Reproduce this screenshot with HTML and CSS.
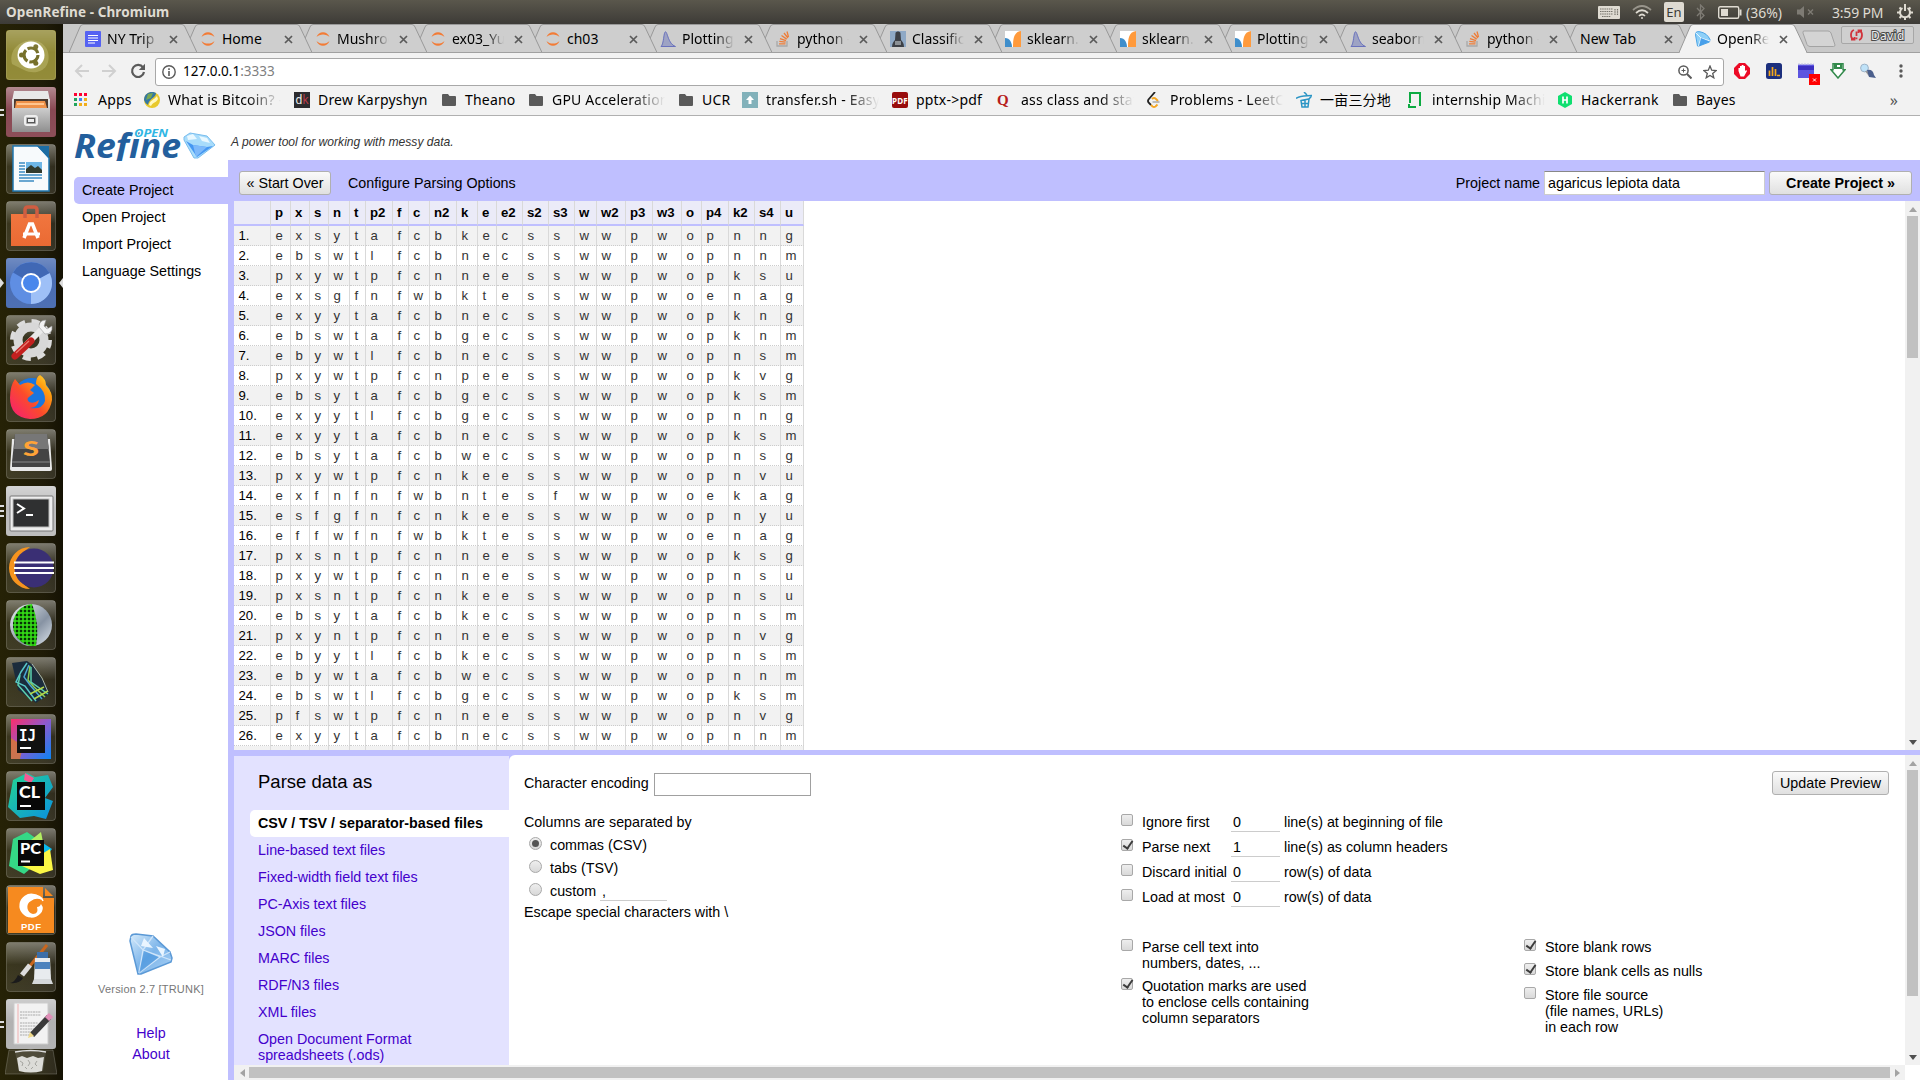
FILE: index.html
```html
<!DOCTYPE html>
<html lang="en">
<head>
<meta charset="utf-8">
<title>OpenRefine</title>
<link rel="stylesheet" href="styles.css">
</head>
<body>
<svg class="defs" width="0" height="0">
  <defs>
    <linearGradient id="gloss" x1="0" y1="0" x2="0" y2="1"><stop offset="0" stop-color="#fff" stop-opacity=".42"/><stop offset=".45" stop-color="#fff" stop-opacity=".1"/><stop offset="1" stop-color="#fff" stop-opacity=".13"/></linearGradient>
    <linearGradient id="gem" x1="0" y1="0" x2="1" y2="1"><stop offset="0" stop-color="#d6ebfb"/><stop offset=".5" stop-color="#7db5ea"/><stop offset="1" stop-color="#a9d0f4"/></linearGradient>
    <linearGradient id="steel" x1="0" y1="0" x2="0" y2="1"><stop offset="0" stop-color="#e4e4e4"/><stop offset="1" stop-color="#8f8f8f"/></linearGradient>
    <linearGradient id="bag" x1="0" y1="0" x2="0" y2="1"><stop offset="0" stop-color="#f1763f"/><stop offset="1" stop-color="#ea6a33"/></linearGradient>
    <linearGradient id="fox" x1="0" y1="1" x2="1" y2="0"><stop offset="0" stop-color="#f5197c"/><stop offset=".45" stop-color="#fb4b2b"/><stop offset=".75" stop-color="#ff9d10"/><stop offset="1" stop-color="#ffe840"/></linearGradient>
    <linearGradient id="ij" x1="0" y1="0" x2="1" y2="1"><stop offset="0" stop-color="#fe2d6a"/><stop offset=".5" stop-color="#8a5bd0"/><stop offset="1" stop-color="#0a84f4"/></linearGradient>
    <linearGradient id="cl" x1="0" y1="0" x2="1" y2="1"><stop offset="0" stop-color="#24d790"/><stop offset="1" stop-color="#0a90e0"/></linearGradient>
    <linearGradient id="ball" x1="0" y1="0" x2="1" y2="1"><stop offset="0" stop-color="#eef2f6"/><stop offset=".6" stop-color="#8793a3"/><stop offset="1" stop-color="#dfe6ee"/></linearGradient>
    <pattern id="mesh" width="4" height="4" patternUnits="userSpaceOnUse"><rect width="4" height="4" fill="#063006"/><path d="M0 1h4M1 0v4" stroke="#34e215" stroke-width="1.500"/></pattern>
    <symbol id="i-doc" viewBox="0 0 16 16"><rect width="16" height="16" rx="1" fill="#5562f2"/><path d="M3 4.500h10M3 7h10M3 9.500h10M3 12h7" stroke="#fff" stroke-width="1.200"/></symbol>
    <symbol id="i-jup" viewBox="0 0 16 16"><path d="M1.500 6C3.500-.4 12.500-.4 14.500 6 11.500 2.600 4.500 2.600 1.500 6zM1.500 10C3.500 16.400 12.500 16.400 14.500 10 11.500 13.400 4.500 13.400 1.500 10z" fill="#f37b35"/></symbol>
    <symbol id="i-dist" viewBox="0 0 16 16"><path d="M1 15.500C4 13 3.500.8 5.500.8S8 13 15.500 15.500z" fill="#9ea3c4" stroke="#6a72bd"/></symbol>
    <symbol id="i-so" viewBox="0 0 16 16"><path d="M2 10v5h10v-5" fill="none" stroke="#a8a8a8" stroke-width="1.300"/><path d="M4 12.800h6.500M4.300 10.300l6.300.9M5 7.600l6 2M6.500 4.500l5.200 3.600M9 2l4 5M12 .5l1.500 5.500" stroke="#ee7d38" stroke-width="1.300"/></symbol>
    <symbol id="i-photo" viewBox="0 0 16 16"><rect width="16" height="16" fill="#8fa9c6"/><path d="M2 16c0-4 2-6 3-7L5.500 2C6 0 10 0 10.500 2L11 9c1 1 3 3 3 7z" fill="#3d4046"/><path d="M5 10h6v4H5z" fill="#8b9095"/></symbol>
    <symbol id="i-skl" viewBox="0 0 16 16"><rect width="16" height="16" fill="#fff"/><path d="M0 7c5 0 7 5 7 9H0z" fill="#3f8ecb"/><path d="M8 16C8 8 8.500 1 16 0v16z" fill="#ff9a3c"/></symbol>
    <symbol id="i-gem" viewBox="0 0 44 42"><path d="M2 3Q3 1 7 1L24 3 41 19 43 25 42 29 12 41 9 41 1 8z" fill="url(#gem)" stroke="#5b99d6" stroke-width="1.500"/><path d="M2 4L14 17 42 27M14 17L10 40M14 17L24 3M14 17L31 24 41 19M10 40L31 24" fill="none" stroke="#cfe5fa" stroke-width="1.300"/><path d="M15 5l9 10-12-2zM27 13l9 3-2 8z" fill="#eaf5ff"/><path d="M10 40l5-22 15 6z" fill="#2f86d8" opacity=".45"/></symbol>
    <symbol id="i-gem2" viewBox="0 0 33 27"><path d="M1 5L7 1 24 4 32 13 15 26 11 26 1 8z" fill="#a8dcfb" stroke="#78bdee"/><path d="M3 9l7 4 14 2 6-1-16 11z" fill="#4597f2"/><path d="M10 13l3 12 11-10z" fill="#7db9fa"/><path d="M4 4l6-2 4 5-9 1zM16 4l8 2 3 5-8-2z" fill="#e9f8ff"/></symbol>
    <symbol id="i-gem3" viewBox="0 0 16 16"><path d="M1 1.500Q2 0 5 .8 12 2 15 8.500L14.500 11 4 15 2.500 15 0.500 4z" fill="#8ed0f8" stroke="#4ea5e6"/><path d="M1 2l5 5 9 3M6 7L3.500 15" stroke="#fff" stroke-width=".8" fill="none"/><path d="M6 7l8.500 3.500L4 15z" fill="#2f8fe6" opacity=".75"/></symbol>
    <symbol id="i-apps" viewBox="0 0 16 16"><path d="M0 1h3v3H0zM5 1h3v3H5zM10 1h3v3h-3z" fill="#f03"/><path d="M0 6h3v3H0zM0 11h3v3H0z" fill="#20a45c"/><path d="M5 6h3v3H5z" fill="#4285f4"/><path d="M5 11h3v3H5zM10 6h3v3h-3zM10 11h3v3h-3z" fill="#f2ae1b"/></symbol>
    <symbol id="i-btc" viewBox="0 0 16 16"><circle cx="8" cy="8" r="8" fill="#e8c92c"/><path d="M0 8a8 8 0 0 1 12-7C12 6 5 6 4 13A8 8 0 0 1 0 8z" fill="#3578a3"/><path d="M4 2l5-1-2 5-5 2z" fill="#79a850"/><path d="M5 13c1-5 5-5 8-9l1 3c-2 4-5 3-7 7z" fill="#fff8c0"/></symbol>
    <symbol id="i-dk" viewBox="0 0 16 16"><rect width="16" height="16" fill="#2c2b2e"/><text x="1.500" y="12" font-size="12" font-family="Roboto" fill="#eee">d</text><text x="8.500" y="12" font-size="12" font-family="Roboto" fill="#b23a48">k</text></symbol>
    <symbol id="i-folder" viewBox="0 0 16 16"><path d="M0 3q0-1 1-1h5l1.500 2H13q1 0 1 1v8q0 1-1 1H1q-1 0-1-1z" fill="#5a5a5a"/></symbol>
    <symbol id="i-tsh" viewBox="0 0 16 16"><rect width="16" height="16" fill="#82b1ba"/><path d="M8 3.500L12 8H9.500v4h-3V8H4z" fill="#fff"/></symbol>
    <symbol id="i-pdf" viewBox="0 0 16 16"><rect width="16" height="16" rx="2" fill="#990c0c"/><text x="0" y="11.500" font-size="8.500" font-weight="700" font-family="Noto Sans" textLength="16" lengthAdjust="spacingAndGlyphs" fill="#fff">PDF</text></symbol>
    <symbol id="i-q" viewBox="0 0 16 16"><text x="0" y="12.500" font-size="15" font-weight="700" font-family="Liberation Serif" fill="#b71c1c">Q</text></symbol>
    <symbol id="i-leet" viewBox="0 0 16 16"><path d="M9 0L2.500 7.500Q1.500 9 2.500 10.500L5 13" fill="none" stroke="#222" stroke-width="1.800"/><path d="M5 13l1.500 1.500q1.500 1 3 0l2-2M6 7q2-2 4 0l2 2" fill="none" stroke="#f5a623" stroke-width="1.800"/><path d="M6.500 10h7" stroke="#aaa" stroke-width="1.500"/></symbol>
    <symbol id="i-acre" viewBox="0 0 16 16"><path d="M8 0l3 3M0 6.500C5 3 9 4 16 3.500L13 7M5 8.500l8-1.500-1 8H6zM6 11.500h6M9 8v7" fill="none" stroke="#2b95c5" stroke-width="1.500"/></symbol>
    <symbol id="i-gd" viewBox="0 0 16 16"><path d="M2 11V1h10v13" fill="none" stroke="#0caa41" stroke-width="2"/><path d="M1 12v3h7" fill="none" stroke="#0caa41" stroke-width="2"/></symbol>
    <symbol id="i-hr" viewBox="0 0 16 16"><path d="M8 0l7 4v8l-7 4-7-4V4z" fill="#0fdf70"/><path d="M6 4.500v7M10 4.500v7M6 8h4" stroke="#fff" stroke-width="1.700"/></symbol>
  </defs>
</svg>

<header class="panel">
  <span class="panel-title">OpenRefine - Chromium</span>
  <div class="tray">
    <svg class="t-kbd" width="22" height="13"><rect width="22" height="13" rx="1" fill="#dfdbd2"/><path d="M2 3h13M2 5.500h13M2 8h13M4 10.500h9M17 3v6M19.500 3v6" stroke="#77746c" stroke-width="1.200" stroke-dasharray="1.500 .7"/></svg>
    <svg class="t-wifi" width="20" height="16" fill="none" stroke="#dfdbd2" stroke-width="1.700"><path d="M1 6q9-8 18 0" opacity=".5"/><path d="M4 9q6-5.500 12 0M7 12q3-3 6 0"/><circle cx="10" cy="14" r="1" fill="#dfdbd2" stroke="none"/></svg>
    <span class="t-lang">En</span>
    <svg class="t-bt" width="10" height="16"><path d="M1 4l7 7.500L4.500 15V1L8 4.500 1 12" fill="none" stroke="#7e7b74" stroke-width="1.300"/></svg>
    <svg class="t-bat" width="24" height="13"><rect x=".7" y=".7" width="20" height="11.500" rx="1.500" fill="none" stroke="#dfdbd2" stroke-width="1.400"/><path d="M22.500 3.500v6" stroke="#dfdbd2" stroke-width="2"/><rect x="3" y="3" width="7" height="7" fill="#dfdbd2"/></svg>
    <span class="t-pct">(36%)</span>
    <svg class="t-vol" width="18" height="12"><path d="M0 3.500h3L7 0v12L3 8.500H0z" fill="#7e7b74"/><path d="M11 3.500l5 5M16 3.500l-5 5" stroke="#7e7b74" stroke-width="1.400"/></svg>
    <span class="t-time">3:59 PM</span>
    <svg class="t-gear" width="16" height="16" fill="none" stroke="#dfdbd2"><path d="M5.500 4a5 5 0 1 0 5 0" stroke-width="2"/><path d="M8 0v7" stroke-width="2"/><path d="M0 8.500h3M13 8.500h3M2.500 14l2-2M13.500 14l-2-2M8 13v3M2.500 3.500L4 5M13.500 3.500L12 5" stroke-width="2"/></svg>
  </div>
</header>

<div class="desktop">
<nav class="launcher">
  <svg class="tile" viewBox="0 0 50 50"><rect width="50" height="50" rx="3" fill="#8a8229"/><path d="M6 34C0 12 34 0 42 22 46 40 30 46 18 40" fill="#b4ad5c" opacity=".6"/><circle cx="25" cy="25" r="13.500" fill="#fff"/><circle cx="25" cy="25" r="7" fill="none" stroke="#6d661c" stroke-width="3.200" stroke-dasharray="12.600 2"/><g fill="#6d661c"><circle cx="15.500" cy="25" r="2.500"/><circle cx="29.800" cy="16.800" r="2.500"/><circle cx="29.800" cy="33.200" r="2.500"/></g><rect x=".5" y=".5" width="49" height="49" rx="3" fill="url(#gloss)" stroke="#fff" stroke-opacity=".25" opacity=".6"/></svg>
  <svg class="tile" viewBox="0 0 50 50"><rect width="50" height="50" rx="3" fill="#7c3440"/><rect width="50" height="50" rx="3" fill="url(#gloss)"/><path d="M8 4h34l2 10H6z" fill="#e8e8e8"/><path d="M8 12h34v10H8z" fill="#4a3a30"/><path d="M10 14h29l2 7H9z" fill="#ee9149"/><path d="M11 17h27" stroke="#ffc58f" stroke-width="2"/><path d="M6 12h2v9h34v-9h2v33H6z" fill="url(#steel)"/><rect x="19" y="29" width="12" height="9" rx="2" fill="none" stroke="#eee" stroke-width="2"/><rect x="21.500" y="31.500" width="7" height="4" fill="#eee" stroke="#555"/></svg>
  <svg class="tile" viewBox="0 0 50 50"><rect x=".5" y=".5" width="49" height="49" rx="3" fill="url(#gloss)" stroke="#fff" stroke-opacity=".2"/><path d="M7 2h25l11 12v33H7z" fill="#f7fafc" stroke="#1f77b0" stroke-width="1.500"/><path d="M31 2h12v12z" fill="#1d6da3"/><path d="M13 19h6M13 22h6M13 25h6M13 28h6M13 31h23M13 34h23M13 37h15" stroke="#3d8cc2" stroke-width="1.300"/><rect x="20" y="18" width="16" height="11" fill="#6eb6e6"/><path d="M20 29v-4l5-4 4 3 3-2 4 4v3z" fill="#333b2d"/></svg>
  <svg class="tile" viewBox="0 0 50 50"><rect x=".5" y=".5" width="49" height="49" rx="3" fill="url(#gloss)" stroke="#fff" stroke-opacity=".2"/><path d="M5 13h40v32H5z" fill="url(#bag)"/><path d="M19 17v-8q0-3 3-3h6q3 0 3 3v8" fill="none" stroke="#cf5d41" stroke-width="3.500"/><path d="M18 37l5.500-14h3L32 37" fill="none" stroke="#fff" stroke-width="3.500"/><path d="M17 33h17" stroke="#fff" stroke-width="3"/></svg>
  <svg class="tile" viewBox="0 0 50 50"><rect width="50" height="50" rx="3" fill="#3f64ad"/><rect width="50" height="50" rx="3" fill="url(#gloss)" opacity=".6"/><circle cx="25" cy="25" r="21" fill="#5f8ee3"/><path d="M25 25L43.500 15A21 21 0 0 1 25 46z" fill="#9ec0f7"/><path d="M25 25L7 14.500A21 21 0 0 1 43.500 15z" fill="#4068b5"/><circle cx="25" cy="25" r="10" fill="#fff"/><circle cx="25" cy="25" r="8" fill="#4a87ec"/></svg>
  <svg class="tile" viewBox="0 0 50 50"><rect x=".5" y=".5" width="49" height="49" rx="3" fill="url(#gloss)" stroke="#fff" stroke-opacity=".2"/><circle cx="25" cy="25" r="18.500" fill="none" stroke="#dcdcdc" stroke-width="5" stroke-dasharray="8 6.530"/><circle cx="25" cy="25" r="13" fill="none" stroke="#d8d8d8" stroke-width="9"/><path d="M20 30L36 14" stroke="#eaeaea" stroke-width="6"/><path d="M33 12q0-7 7-7l-2 6 3 3 5-3q1 8-7 8z" fill="#f4f4f4" stroke="#999" stroke-width=".6"/><path d="M9 41L25 26" stroke="#c4201f" stroke-width="7" stroke-linecap="round"/><path d="M10 38l13-12" stroke="#e87a70" stroke-width="1.300"/></svg>
  <svg class="tile" viewBox="0 0 50 50"><rect x=".5" y=".5" width="49" height="49" rx="3" fill="url(#gloss)" stroke="#fff" stroke-opacity=".2"/><circle cx="26" cy="25" r="19" fill="#1976e0"/><path d="M9 7l5 6q8-5 15 0l-5 5 4 3-5 4q-3 2 0 5 5 2 10-2-1 7-9 8 12 2 15-7 1-10-9-17 0-7 4-9 6 4 6 10 7 8 6 15-3 19-22 19Q4 45 4 26 4 14 9 7z" fill="url(#fox)"/></svg>
  <svg class="tile" viewBox="0 0 50 50"><rect x=".5" y=".5" width="49" height="49" rx="3" fill="url(#gloss)" stroke="#fff" stroke-opacity=".2"/><path d="M6 10l-2 30q0 2 2 2h38q2 0 2-2L44 10z" fill="#e8e8e8"/><path d="M9 5h32l3 28v5H6v-5z" fill="#444"/><path d="M9 5h32l2 15H8z" fill="#777"/><path d="M6 33h38" stroke="#888"/><text x="17" y="27" font-family="Lato" font-weight="900" font-size="21" fill="#ffa337" textLength="16" lengthAdjust="spacingAndGlyphs">S</text></svg>
  <svg class="tile" viewBox="0 0 50 50"><rect width="50" height="50" rx="3" fill="#b5b5b5"/><rect width="50" height="50" rx="3" fill="url(#gloss)"/><rect x="4" y="10" width="43" height="35" rx="1" fill="#eee" stroke="#777"/><rect x="7" y="13" width="36" height="28" fill="#2f3031" stroke="#bbb"/><path d="M11 18l7 4.500-7 4.500M20 29h7" fill="none" stroke="#fff" stroke-width="2"/></svg>
  <svg class="tile" viewBox="0 0 50 50"><rect x=".5" y=".5" width="49" height="49" rx="3" fill="url(#gloss)" stroke="#fff" stroke-opacity=".2"/><path d="M24 4A21 21 0 0 0 24 46 24 24 0 0 1 24 4z" fill="#f7941e"/><circle cx="28" cy="25" r="19.500" fill="#3a2f74"/><path d="M8 19.500h40M8 25h40M8 30h40" stroke="#fff" stroke-width="2.200"/></svg>
  <svg class="tile" viewBox="0 0 50 50"><rect x=".5" y=".5" width="49" height="49" rx="3" fill="url(#gloss)" stroke="#fff" stroke-opacity=".2"/><circle cx="25" cy="25" r="21" fill="url(#ball)"/><path d="M26 4q8 20 4 42A21 21 0 0 1 26 4z" fill="url(#mesh)"/></svg>
  <svg class="tile" viewBox="0 0 50 50"><rect x=".5" y=".5" width="49" height="49" rx="3" fill="url(#gloss)" stroke="#fff" stroke-opacity=".2"/><path d="M6 6l15-2 6 4 17 28-14 10L12 33z" fill="#1b2c3c"/><g fill="none" stroke-width="1.500"><path d="M21 6l-6 9-5 10 9 4 11 15" stroke="#57c7c9"/><path d="M23 8l-5 12 6 8 12 14" stroke="#4aa8d4"/><path d="M24 9l-2 14 6 7 11 10" stroke="#8ccf58"/><path d="M25 10v15l17 12M14 18l-2 10 14 16" stroke="#5ccfae"/><path d="M26 7l10 14 6 14" stroke="#c5d9d1" stroke-width=".8"/><path d="M28 42l14-8M24 37l14-7" stroke="#b4d84b"/></g></svg>
  <svg class="tile" viewBox="0 0 50 50"><rect x=".5" y=".5" width="49" height="49" rx="3" fill="url(#gloss)" stroke="#fff" stroke-opacity=".2"/><rect x="5" y="5" width="40" height="40" fill="url(#ij)"/><path d="M5 24l12 8-3 13H5z" fill="#d9792e" opacity=".8"/><rect x="11" y="11" width="28" height="28" fill="#111"/><text x="13" y="27" font-family="DejaVu Sans Mono" font-weight="700" font-size="16" fill="#fff" textLength="17" lengthAdjust="spacingAndGlyphs">IJ</text><path d="M14 34h11" stroke="#fff" stroke-width="2"/></svg>
  <svg class="tile" viewBox="0 0 50 50"><rect x=".5" y=".5" width="49" height="49" rx="3" fill="url(#gloss)" stroke="#fff" stroke-opacity=".2"/><path d="M7 9l14-7 8 4 13-2 5 12-8 11 8 3-7 18-12-3-14 2L2 36z" fill="url(#cl)"/><path d="M19 2l9 5-3 5-7-3z" fill="#f55a94"/><rect x="11" y="11" width="28" height="28" fill="#080808"/><text x="13" y="27" font-family="Lato" font-weight="900" font-size="16" fill="#fff" textLength="21" lengthAdjust="spacingAndGlyphs">CL</text><path d="M14 35h11" stroke="#fff" stroke-width="2"/></svg>
  <svg class="tile" viewBox="0 0 50 50"><rect x=".5" y=".5" width="49" height="49" rx="3" fill="url(#gloss)" stroke="#fff" stroke-opacity=".2"/><path d="M7 11l14-7 10 7 5 20-18 15L3 38z" fill="#35d886"/><path d="M25 12l10-8 2 10z" fill="#b3ee62"/><path d="M37 15l9 6-7 9z" fill="#0bb9ec"/><path d="M16 38l28-17 3 21-13 4z" fill="#fbf745"/><rect x="12" y="12" width="26" height="26" fill="#080808"/><text x="14" y="26" font-family="Lato" font-weight="900" font-size="15" fill="#fff" textLength="21" lengthAdjust="spacingAndGlyphs">PC</text><path d="M15 33.500h9" stroke="#fff" stroke-width="2"/></svg>
  <svg class="tile" viewBox="0 0 50 50"><rect x=".5" y=".5" width="49" height="49" rx="3" fill="url(#gloss)" stroke="#fff" stroke-opacity=".2"/><path d="M2 2h35v11h11v35H2z" fill="#f68a1f"/><path d="M39 3l8 8h-8z" fill="#f68a1f"/><path d="M36 15A12 12 0 1 0 34 29Q39 24 35 19q-1 3-4 3 2 7-4 7a7 7 0 0 1-2-13q5-4 11-1z" fill="#fff"/><path d="M27 10q8 0 10 6" fill="none" stroke="#fff" stroke-width="1.500"/><text x="15" y="44.500" font-family="Liberation Sans" font-weight="700" font-size="9.500" fill="#fff" textLength="20">PDF</text></svg>
  <svg class="tile" viewBox="0 0 50 50"><rect x=".5" y=".5" width="49" height="49" rx="3" fill="url(#gloss)" stroke="#fff" stroke-opacity=".2"/><path d="M41 3L23 25" stroke="#c9661d" stroke-width="3"/><path d="M24 23l-8 10" stroke="#ddd" stroke-width="5"/><path d="M4 41q5-1 8-8l5 3q-3 6-13 5z" fill="#1b1b1b"/><path d="M31 10h11v6H31z" fill="#3c6ea8"/><path d="M29 16h15l1 21H28z" fill="#e8ebee"/><path d="M29 20h15v7H29z" fill="#4d82bd"/><path d="M28 37h17l2 5H26z" fill="#d5d8da"/></svg>
  <svg class="tile" viewBox="0 0 50 50"><rect width="50" height="50" rx="3" fill="#a9a9a9"/><rect width="50" height="50" rx="3" fill="url(#gloss)"/><path d="M8 4h34v41H8z" fill="#f2f2f2" stroke="#ccc"/><path d="M12 5v39" stroke="#f0b0b0"/><path d="M14 13h21M14 16h21M14 19h8M14 24h18M14 27h16M14 30h15M14 33h14M14 36h10" stroke="#aaa" stroke-dasharray="2 .6"/><path d="M26 36L43 18" stroke="#3a3a3a" stroke-width="6"/><path d="M41 20l4-4" stroke="#e08fb8" stroke-width="6"/><path d="M22 39l2-6 4 4z" fill="#efd98a"/></svg>
  <svg class="trash" viewBox="0 0 52 26"><path d="M4 1h44l4 24H0z" fill="#fff" fill-opacity=".1" stroke="#fff" stroke-opacity=".2"/><path d="M10 3q16-3 31 0l-3 19q-12 3-24 0z" fill="#fff" fill-opacity=".12"/><path d="M10 3q16-3 31 0" fill="none" stroke="#ddd" stroke-width="1.500"/><path d="M12 9l5-2 5 2 6-2 5 2 6-1-2 14q-11 3-23 0z" fill="#dcdcd8"/><path d="M15 12l3 2-1 3M23 11l2 3-2 3M32 12l-2 3 2 2M20 18l2 2M28 18l-2 2" stroke="#a5a5a0" fill="none"/></svg>
  <div class="pips p-two" style="top:85px"></div>
  <div class="pips p-tri" style="top:254px"></div>
  <div class="pips p-tri p-right" style="top:254px"></div>
  <div class="pips p-three" style="top:481px"></div>
  <div class="pips p-two" style="top:997px"></div>
</nav>

<main class="window">
  <div class="tabstrip">
    <div class="tabs" id="tabs"></div>
    <svg class="newtab" width="36" height="18"><path d="M3 1h24q2 0 3 2l4 12q0 1.500-1.500 1.500H9q-2 0-3-2L2 3Q1.500 1 3 1z" fill="#d4d4d4" stroke="#a3a3a3"/></svg>
    <div class="user"><svg width="13" height="12" fill="none" stroke="#d1343c" stroke-width="1.800"><path d="M4 1Q1 2 1 6t3 4M1 10.500h3.500V8M9 11q3-1 3-5T9 2M12 1.500H8.500V4M6.500 2.500V7M6.500 8.500v1.800"/></svg><span>David</span></div>
  </div>
  <div class="toolbar">
    <svg class="arrow" width="16" height="14" fill="none" stroke="#d0d0d0" stroke-width="2"><path d="M15 7H2M8 1L2 7l6 6"/></svg>
    <svg class="arrow" width="16" height="14" fill="none" stroke="#d0d0d0" stroke-width="2"><path d="M0 7h13M7 1l6 6-6 6"/></svg>
    <svg class="reload" width="16" height="16"><path d="M13 4.500A6 6 0 1 0 14 9" fill="none" stroke="#5a5a5a" stroke-width="2.200"/><path d="M15 .8V7H8.800z" fill="#5a5a5a"/></svg>
    <div class="omnibox">
      <svg width="14" height="14"><circle cx="7" cy="7" r="6.200" fill="none" stroke="#5a5a5a" stroke-width="1.400"/><path d="M7 6v5M7 3.200V5" stroke="#5a5a5a" stroke-width="1.600"/></svg>
      <span class="url">127.0.0.1<span class="port">:3333</span></span>
      <svg class="mag" width="14" height="14" fill="none" stroke="#5a5a5a" stroke-width="1.500"><circle cx="5.500" cy="5.500" r="4.600"/><path d="M9 9l4.500 4.500" stroke-width="2"/><path d="M3.500 5.500h4M5.500 3.500v4" stroke-width="1"/></svg>
      <svg class="star" width="14" height="14"><path d="M7 1l1.700 4.200 4.500.3-3.500 2.900 1.100 4.400L7 10.400l-3.800 2.400 1.100-4.400L.8 5.500l4.500-.3z" fill="none" stroke="#5a5a5a" stroke-width="1.300"/></svg>
    </div>
    <div class="exts">
      <svg width="16" height="16"><path d="M5 0h6l5 5v6l-5 5H5l-5-5V5z" fill="#ec0a26"/><path d="M4.500 8V5h1.500V3h1.700V2h1.800v1h1.500v5l1.200-1 .8 1-3 5.500H6.500z" fill="#fff"/></svg>
      <svg width="16" height="16"><rect width="16" height="16" rx="2.500" fill="#1c2f7d"/><path d="M3.500 13V7.500M6.500 13V4M9.500 13V6M11 12.500h3" stroke="#f5a81c" stroke-width="1.700"/></svg>
      <svg width="22" height="22"><path d="M0 1.500h16V15H0z" fill="#5c55e0"/><path d="M0 3h16v4H0z" fill="#3c2fc0"/><path d="M0 1h16" stroke="#c3c3e4" stroke-dasharray="2 1"/><rect x="11" y="11" width="11" height="11" fill="#f00"/><path d="M15 15.500l3 3M18 15.500l-3 3" stroke="#fff"/></svg>
      <svg width="16" height="16"><path d="M3 .8h10v6h2L8 15 1 6.800h2z" fill="#fff" stroke="#338a4c" stroke-width="1.500"/><path d="M4 1h8v5H4z" fill="#338a4c"/><path d="M7 2h3v2H7z" fill="#fff"/></svg>
      <svg width="17" height="16"><circle cx="4.500" cy="5" r="3.900" fill="#bfe2f8" stroke="#9fb4c8"/><path d="M6 8l4 5" stroke="#999" stroke-width="2"/><path d="M7 7q6-1 7 5l2 3-7-1z" fill="#4b5f8c"/></svg>
      <svg width="4" height="16" fill="#5a5a5a"><circle cx="2" cy="3" r="1.700"/><circle cx="2" cy="8" r="1.700"/><circle cx="2" cy="13" r="1.700"/></svg>
    </div>
  </div>
  <div class="bookmarks" id="bookmarks"></div>

  <div class="page">
    <div class="brand">
      <svg class="logo" width="142" height="34"><text x="0" y="30.500" font-family="Noto Sans" font-weight="700" font-style="italic" font-size="34" fill="#235f9d" textLength="107" lengthAdjust="spacingAndGlyphs">Refine</text><text x="60" y="10" font-family="Open Sans" font-weight="700" font-style="italic" font-size="10.500" fill="#2fb6e4" stroke="#fff" stroke-width="2" paint-order="stroke" textLength="34" lengthAdjust="spacingAndGlyphs">OPEN</text><use href="#i-gem2" x="109" y="5" width="33" height="27"/></svg>
      <span class="tagline">A power tool for working with messy data.</span>
    </div>
    <div class="columns">
      <aside class="side">
        <ul class="menu">
          <li class="on">Create Project</li><li>Open Project</li><li>Import Project</li><li>Language Settings</li>
        </ul>
        <div class="about">
          <svg width="44" height="42"><use href="#i-gem" width="44" height="42"/></svg>
          <span class="version">Version 2.7 [TRUNK]</span>
          <a>Help</a><a>About</a>
        </div>
      </aside>
      <section class="work">
        <div class="bar">
          <span class="btn start">« Start Over</span>
          <span class="bar-title">Configure Parsing Options</span>
          <span class="pn-label">Project name</span>
          <span class="pn-input">agaricus lepiota data</span>
          <span class="btn create">Create Project »</span>
        </div>
        <div class="preview">
          <div class="sheet"><table><colgroup id="cols"></colgroup><thead id="head"></thead><tbody id="rows"></tbody></table></div>
          <div class="vscroll"><i class="up"></i><b class="thumb-top"></b><i class="down"></i></div>
        </div>
        <div class="config">
          <div class="config-body">
            <div class="formats">
              <h2>Parse data as</h2>
              <ul>
                <li class="on">CSV / TSV / separator-based files</li><li>Line-based text files</li><li>Fixed-width field text files</li><li>PC-Axis text files</li><li>JSON files</li><li>MARC files</li><li>RDF/N3 files</li><li>XML files</li><li>Open Document Format<br>spreadsheets (.ods)</li>
              </ul>
            </div>
            <div class="options">
              <div class="opt-top"><span>Character encoding</span><span class="enc"></span><span class="btn update">Update Preview</span></div>
              <div class="opt-grid">
                <div class="seps">
                  <p>Columns are separated by</p>
                  <div class="radio"><i class="dot on"></i>commas (CSV)</div>
                  <div class="radio"><i class="dot"></i>tabs (TSV)</div>
                  <div class="radio"><i class="dot"></i>custom<span class="line-in sep-in">,</span></div>
                  <p class="esc">Escape special characters with \</p>
                </div>
                <div class="mid">
                  <div class="num"><i class="box"></i><span>Ignore first</span><span class="line-in">0</span><span>line(s) at beginning of file</span></div>
                  <div class="num"><i class="box on"></i><span>Parse next</span><span class="line-in">1</span><span>line(s) as column headers</span></div>
                  <div class="num"><i class="box"></i><span>Discard initial</span><span class="line-in">0</span><span>row(s) of data</span></div>
                  <div class="num"><i class="box"></i><span>Load at most</span><span class="line-in">0</span><span>row(s) of data</span></div>
                  <div class="checks first"><div><i class="box"></i><span>Parse cell text into<br>numbers, dates, ...</span></div><div><i class="box on"></i><span>Quotation marks are used<br>to enclose cells containing<br>column separators</span></div></div>
                </div>
                <div class="checks last"><div><i class="box on"></i><span>Store blank rows</span></div><div><i class="box on"></i><span>Store blank cells as nulls</span></div><div><i class="box"></i><span>Store file source<br>(file names, URLs)<br>in each row</span></div></div>
              </div>
            </div>
            <div class="vscroll"><i class="up"></i><b class="thumb-bot"></b><i class="down"></i></div>
          </div>
          <div class="hscroll"><i class="left"></i><b></b><i class="right"></i></div>
        </div>
      </section>
    </div>
  </div>
</main>
</div>
<script src="app.js"></script>
</body>
</html>
```

FILE: styles.css
```css
* { box-sizing: border-box; }
body { margin: 0; width: 1920px; height: 1080px; overflow: hidden; display: flex; flex-direction: column; font-family: "Liberation Sans", Arial, sans-serif; font-size: 14.3px; color: #000; background: #fff; }
.defs { position: absolute; }
svg { display: block; flex: none; }
ul, p, h2 { margin: 0; padding: 0; list-style: none; font-weight: 400; }

.panel { height: 24px; flex: none; display: flex; align-items: center; justify-content: space-between; padding: 0 7px 0 6px; background: linear-gradient(#5a574c, #3d3b37); color: #dfdbd2; font-family: "Noto Sans", sans-serif; font-size: 14px; }
.panel-title { font-weight: 700; font-size: 13.5px; letter-spacing: .1px; }
.tray { display: flex; align-items: center; }
.t-wifi { margin-left: 12px; }
.t-lang { margin-left: 12px; width: 20px; height: 20px; line-height: 20px; text-align: center; border-radius: 2px; background: #dfdbd2; color: #3c3b37; font-size: 13px; }
.t-bt { margin-left: 12px; }
.t-bat { margin-left: 12px; }
.t-pct { margin-left: 4px; width: 39px; white-space: nowrap; }
.t-vol { margin-left: 12px; }
.t-time { margin-left: 17px; width: 52px; white-space: nowrap; letter-spacing: -.2px; }
.t-gear { margin-left: 13px; }

.desktop { flex: 1; min-height: 0; display: flex; }
.launcher { position: relative; width: 63px; flex: none; display: flex; flex-direction: column; gap: 7px; padding: 6px 0 0 6px; background: linear-gradient(90deg, #262206, #1f1b07 70%, #151204); }
.tile { width: 50px; height: 50px; }
.trash { width: 52px; height: 26px; margin-top: -7px; margin-left: -1px; }
.pips { position: absolute; left: 0; width: 4px; }
.p-two { height: 7px; border-top: 2px solid #ddd; border-bottom: 2px solid #ddd; }
.p-three { height: 12px; background: repeating-linear-gradient(#ddd 0 2px, transparent 2px 5px); }
.p-tri { width: 0; border: 5px solid transparent; border-left: 4px solid #ddd; border-right: 0; }
.p-right { left: auto; right: 0; border-left: 0; border-right: 4px solid #ddd; }

.window { flex: 1; min-width: 0; display: flex; flex-direction: column; background: #fff; }
.tabstrip { height: 29px; flex: none; display: flex; background: #c9c9c9; border-bottom: 1px solid #a0a0a0; padding-left: 6px; font-family: "Noto Sans", sans-serif; font-size: 14px; }
.tabs { display: flex; width: 1738px; flex: none; }
.tab { position: relative; width: 128px; height: 29px; margin-right: -13px; flex: none; display: flex; align-items: center; padding: 1px 0 0 16px; }
.tab-bg { position: absolute; left: 0; top: 0; }
.tab-icon { position: relative; width: 16px; height: 16px; margin-right: 6px; }
.tab-name { position: relative; width: 52px; overflow: hidden; white-space: nowrap; line-height: 20px; mask-image: linear-gradient(90deg, #000 66%, transparent); }
.tab-name.whole { mask-image: none; }
.tab-name.wide { width: 74px; }
.tab-x { position: relative; margin-left: 10px; }
.newtab { margin: 6px 0 0 -6px; }
.user { margin: 2px 6px 0 auto; width: 73px; height: 18px; border: 1px solid #a7a7a7; border-radius: 2px; background: #cfcfcf; display: flex; align-items: center; gap: 8px; padding-left: 8px; font-size: 12px; color: #eee; -webkit-text-stroke: 2px #4a4a4a; paint-order: stroke fill; letter-spacing: .3px; }

.toolbar { height: 37px; flex: none; display: flex; align-items: center; background: #f2f2f2; padding: 0 0 1px 11px; }
.arrow { margin-right: 12px; }
.reload { margin-right: 11px; }
.omnibox { width: 1569px; flex: none; margin-left: -2px; height: 28px; margin-top: 1px; border: 1px solid #a8a8a8; border-radius: 3px; background: #fff; display: flex; align-items: center; padding: 0 6px; font-family: "Noto Sans", sans-serif; font-size: 13.5px; }
.url { margin-left: 7px; letter-spacing: 0; margin-top: -1px; }
.port { color: #808080; }
.mag { margin-left: auto; margin-right: 11px; }
.exts { flex: 1; display: flex; align-items: center; padding-left: 10px; gap: 16px; }
.exts svg:nth-child(3) { margin: 6px -6px 0 0; }
.exts svg:nth-child(5) { margin-left: -2px; }
.exts svg:last-child { margin-left: 6px; }
.bookmarks { height: 26px; flex: none; display: flex; align-items: center; background: #f2f2f2; border-bottom: 1px solid #b0b0b0; padding: 0 22px 5px 11px; font-family: "Noto Sans", "Noto Sans CJK SC", sans-serif; font-size: 14px; letter-spacing: .2px; }
.bm { flex: none; display: flex; align-items: center; white-space: nowrap; line-height: 20px; }
.bm svg { margin-right: 8px; }
.bm.folder svg { margin-right: 7px; }
.bm.cut span { width: 113px; overflow: hidden; mask-image: linear-gradient(90deg, #000 70%, transparent); }
.more { margin-left: auto; color: #555; font-size: 16px; }

.page { flex: 1; min-height: 0; display: flex; flex-direction: column; }
.brand { height: 44px; flex: none; display: flex; align-items: flex-start; padding: 11px 0 0 11px; }
.tagline { margin: 7px 0 0 15px; font-style: italic; font-size: 12.1px; line-height: 16px; color: #333; }
.columns { flex: 1; min-height: 0; display: flex; }
.side { width: 165px; flex: none; display: flex; flex-direction: column; justify-content: space-between; padding: 17px 0 15px 11px; }
.menu li { height: 27px; line-height: 26px; padding-left: 8px; }
.menu .on { background: #bfbfff; border-radius: 5px 0 0 5px; }
.about { display: flex; flex-direction: column; align-items: center; line-height: 21px; }
.about a { color: #4400cc; }
.version { font-size: 11px; color: #777; line-height: 14px; margin: 7px 0 27px; letter-spacing: .2px; }
.work { flex: 1; min-width: 0; display: flex; flex-direction: column; background: #bfbfff; padding-left: 6px; }
.bar { height: 41px; flex: none; display: flex; align-items: center; padding: 5px 8px 0 5px; }
.btn { border: 1px solid #b0b0b0; border-radius: 3px; background: linear-gradient(#fafafa, #e0e0e0); height: 24px; line-height: 22px; text-align: center; white-space: nowrap; }
.start { width: 92px; }
.bar-title { margin-left: 17px; }
.pn-label { margin-left: auto; }
.pn-input { width: 221px; height: 24px; margin: 0 4px; line-height: 22px; background: #fff; border: 1px solid #ccc; border-top-color: #888; padding-left: 3px; }
.create { width: 143px; font-weight: 700; }

.preview { height: 549px; flex: none; display: flex; background: #fff; }
.sheet { flex: 1; overflow: hidden; }
.vscroll { width: 15px; flex: none; background: #f1f1f1; display: flex; flex-direction: column; align-items: center; }
.vscroll b { width: 11px; background: #c1c1c1; }
.thumb-top { height: 142px; }
.thumb-bot { height: 226px; }
.vscroll i, .hscroll i { width: 0; height: 0; border: 4px solid transparent; }
.vscroll .up { border-bottom: 5px solid #a3a3a3; border-top: 0; margin: 6px 0 4px; }
.vscroll .down { border-top: 5px solid #505050; border-bottom: 0; margin: auto 0 5px; }
table { border-collapse: separate; border-spacing: 0; table-layout: fixed; width: 570px; font-size: 13.2px; }
th, td { padding: 0 0 0 4px; border-right: 1px solid #d9d9d9; text-align: left; overflow: visible; white-space: nowrap; }
th { height: 25px; padding-bottom: 1px; background: #ebebf8; border-bottom: 2px solid #bfbfff; font-weight: 700; }
td { height: 20px; border-bottom: 1px dotted #ccc; color: #333; line-height: 17px; padding-bottom: 0; padding-left: 4.5px; }
td:first-child { color: #000; border-right-color: #ddd; }
tbody tr:nth-child(odd) td { background: #f2f2f2; }

.config { flex: 1; min-height: 0; margin-top: 5px; display: flex; flex-direction: column; background: linear-gradient(#fff, #fff) no-repeat right bottom / 15px 15px; }
.config-body { flex: 1; min-height: 0; display: flex; }
.formats { width: 275px; flex: none; margin-top: 1px; background: #e3e2ff; padding: 14px 0 0 16px; overflow: hidden; }
.formats h2 { font-size: 18.5px; line-height: 24px; padding-left: 8px; margin-bottom: 16px; }
.formats li { line-height: 16px; padding: 5px 8px 6px; color: #4400cc; }
.formats .on { background: #fff; color: #000; font-weight: 700; border-radius: 5px 0 0 5px; }
.options { flex: 1; background: #fff; border-top-left-radius: 6px; padding-left: 15px; }
.opt-top { height: 55px; display: flex; align-items: center; padding: 0 16px 0 0; }
.enc { width: 157px; height: 23px; margin: 3px 0 0 5px; border: 1px solid #a0a0a0; }
.update { width: 117px; margin-left: auto; }
.opt-grid { display: grid; grid-template-columns: 597px 403px 1fr; }
.seps p { line-height: 24px; }
.seps p:first-child { margin-bottom: -1px; }
.radio { height: 23px; display: flex; align-items: center; padding: 0 0 0 5px; }
.dot { width: 13px; height: 13px; border-radius: 50%; border: 1px solid #a8a8a8; background: linear-gradient(#eee, #d8d8d8); margin: -2px 8px 0 0; display: flex; align-items: center; justify-content: center; }
.dot.on::after { content: ""; width: 7px; height: 7px; border-radius: 50%; background: #555; }
.line-in { width: 49px; height: 20px; border-bottom: 1px solid #ccc; line-height: 20px; padding-left: 2px; }
.sep-in { width: 67px; margin-left: 4px; }
.seps .esc { line-height: 18px; margin-top: 1px; }
.num { display: grid; grid-template-columns: 21px 89px 53px 1fr; height: 25px; line-height: 24px; }
.num .line-in { height: 22px; line-height: 24px; }
.box { width: 12px; height: 12px; border: 1px solid #a8a8a8; border-radius: 2px; background: linear-gradient(#eee, #d9d9d9); display: block; flex: none; }
.num .box { margin-top: 4px; }
.box.on::after { content: ""; display: block; width: 4px; height: 8px; margin: -1px 0 0 3px; border: solid #3c3c3c; border-width: 0 2px 2px 0; transform: rotate(35deg); }
.checks { display: flex; flex-direction: column; gap: 7px; line-height: 16px; padding-top: 29px; }
.checks.last { padding-top: 129px; gap: 8px; }
.checks > div { display: flex; gap: 9px; }
.hscroll { height: 15px; flex: none; width: 1671px; background: #f1f1f1; display: flex; align-items: center; }
.hscroll b { flex: 1; height: 11px; background: #c1c1c1; }
.hscroll .left { border-right: 5px solid #a3a3a3; border-left: 0; margin: 0 4px 0 6px; }
.hscroll .right { border-left: 5px solid #a3a3a3; border-right: 0; margin: 0 5px 0 5px; }
```

FILE: app.js
```js
const icon = (id, w = 16) => `<svg width="${w}" height="16" viewBox="0 0 ${w} 16"><use href="#i-${id}" width="16" height="16"/></svg>`;

const tabs = [["doc","NY Trip P"],["jup","Home"],["jup","Mushroom"],["jup","ex03_Yue"],["jup","ch03"],["dist","Plotting"],["so","python -"],["photo","Classific"],["skl","sklearn.e"],["skl","sklearn.e"],["skl","Plotting"],["dist","seaborn"],["so","python -"],["","New Tab"],["gem3","OpenRefi"]];
const whole = ["Home", "ch03", "New Tab"];
document.getElementById("tabs").innerHTML = tabs.map(([ic, name], i) => {
  const active = i === tabs.length - 1;
  const fill = active ? "#f2f2f2" : "#cecece";
  return `<div class="tab" style="z-index:${active ? 40 : 30 - i}">
    <svg class="tab-bg" width="128" height="29"><path d="M0 28.500L11 3Q12 .5 14 .5H113Q115 .5 116 3L128 28.500" fill="${fill}" stroke="#999"/>${active ? '<path d="M1 28.500h126" stroke="#f2f2f2"/>' : '<path d="M0 28.500h128" stroke="#a0a0a0"/>'}</svg>
    ${ic ? `<span class="tab-icon">${icon(ic)}</span>` : ""}
    <span class="tab-name${whole.includes(name) ? " whole" : ""}${ic ? "" : " wide"}">${name}</span>
    <svg class="tab-x" width="9" height="9"><path d="M1 1l7 7M8 1L1 8" stroke="#5a5a5a" stroke-width="1.700"/></svg></div>`;
}).join("");

const marks = [["apps","Apps",70],["btc","What is Bitcoin? - B",150,1],["dk","Drew Karpyshyn",148],["folder","Theano",87],["folder","GPU Acceleration",150,1],["folder","UCR",63],["tsh","transfer.sh - Easy f",150,1],["pdf","pptx->pdf",105],["q","ass class and stats",149,1],["leet","Problems - LeetCo",150,1],["acre","一亩三分地",112],["gd","internship Machine",149,1],["hr","Hackerrank",116],["folder","Bayes",90]];
document.getElementById("bookmarks").innerHTML = marks.map(([ic, name, w, cut]) =>
  `<div class="bm${cut ? " cut" : ""}${ic === "folder" ? " folder" : ""}" style="width:${w}px">${icon(ic)}<span>${name}</span></div>`).join("") + '<span class="more">»</span>';

const widths = [37,20,19,19,21,16,27,16,21,27,21,19,26,26,26,22,29,27,29,20,27,26,26,23];
const names = "p x s n t p2 f c n2 k e e2 s2 s3 w w2 p3 w3 o p4 k2 s4 u".split(" ");
const data = `exsytafcbkecsswwpwopnng ebswtlfcbnecsswwpwopnnm pxywtpfcnneesswwpwopksu exsgfnfwbktesswwpwoenag
exyytafcbnecsswwpwopkng ebswtafcbgecsswwpwopknm ebywtlfcbnecsswwpwopnsm pxywtpfcnpeesswwpwopkvg
ebsytafcbgecsswwpwopksm exyytlfcbgecsswwpwopnng exyytafcbnecsswwpwopksm ebsytafcbwecsswwpwopnsg
pxywtpfcnkeesswwpwopnvu exfnfnfwbntesfwwpwoekag esfgfnfcnkeesswwpwopnyu effwfnfwbktesswwpwoenag
pxsntpfcnneesswwpwopksg pxywtpfcnneesswwpwopnsu pxsntpfcnkeesswwpwopnsu ebsytafcbkecsswwpwopnsm
pxyntpfcnneesswwpwopnvg ebyytlfcbkecsswwpwopnsm ebywtafcbwecsswwpwopnnm ebswtlfcbgecsswwpwopksm
pfswtpfcnneesswwpwopnvg exyytafcbnecsswwpwopnnm`.split(/\s+/);
document.getElementById("cols").innerHTML = widths.map(w => `<col style="width:${w}px">`).join("");
document.getElementById("head").innerHTML = `<tr><th></th>${names.map(n => `<th>${n}</th>`).join("")}</tr>`;
document.getElementById("rows").innerHTML = data.map((r, i) => `<tr><td>${i + 1}.</td>${[...r].map(c => `<td>${c}</td>`).join("")}</tr>`).join("") + `<tr>${"<td></td>".repeat(24)}</tr>`;
```
